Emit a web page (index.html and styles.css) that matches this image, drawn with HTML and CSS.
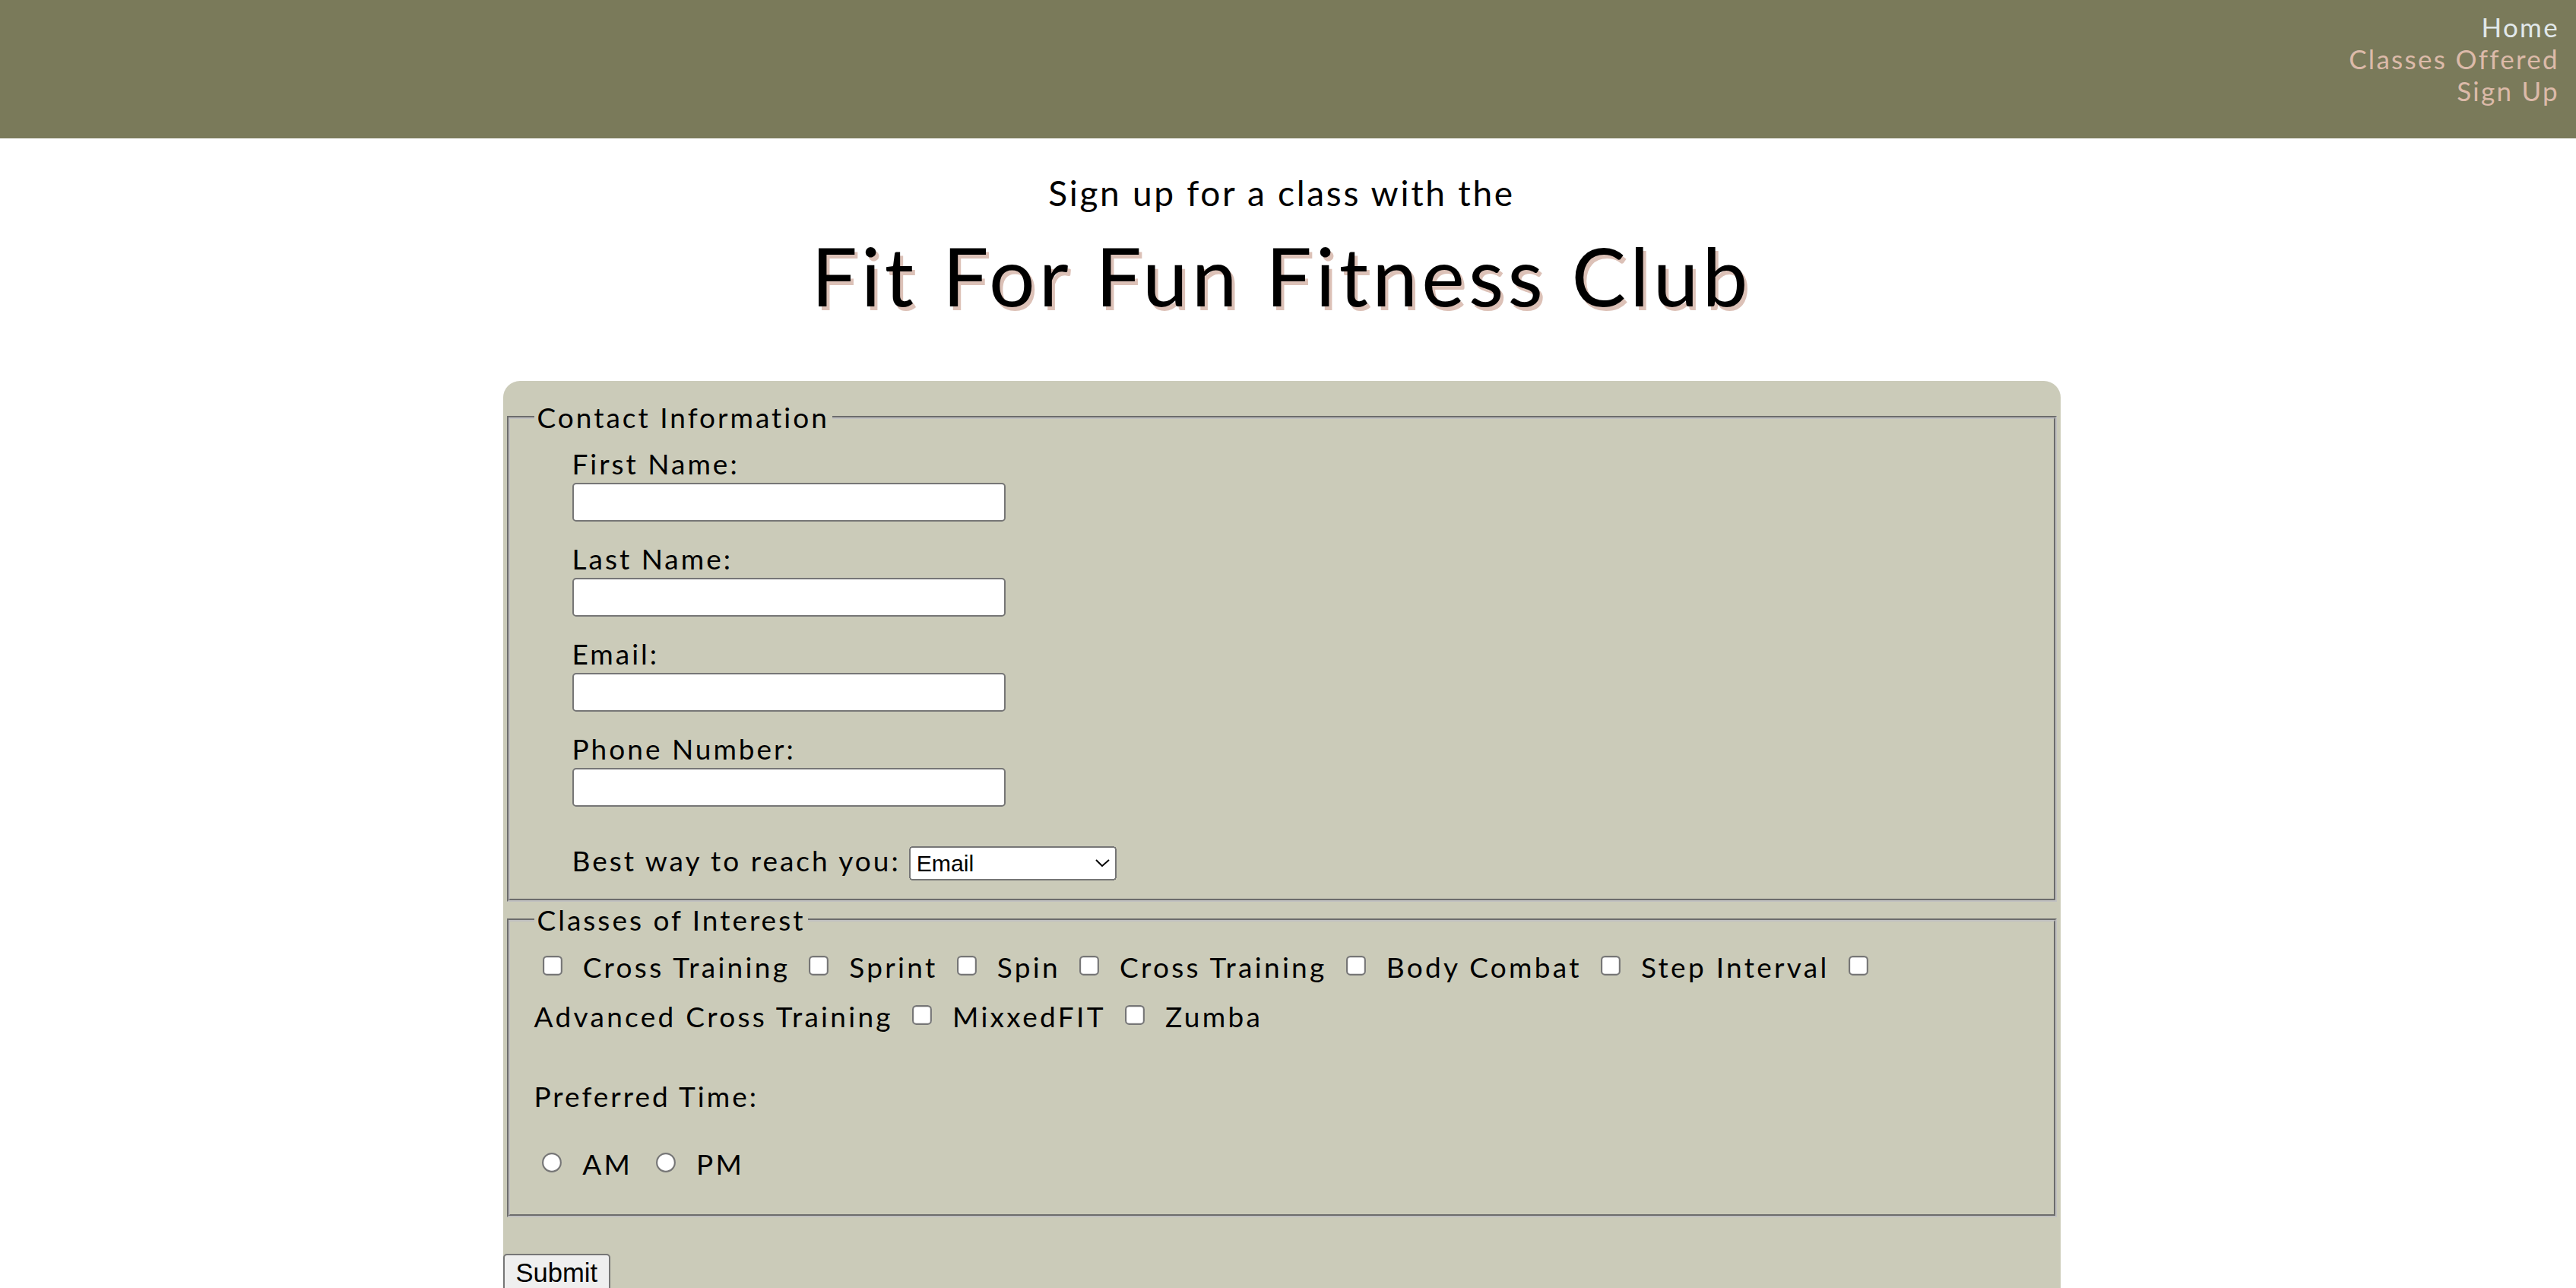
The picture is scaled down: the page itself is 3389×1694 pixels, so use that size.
FILE: index.html
```html
<!DOCTYPE html>
<html lang="en">
<head>
<meta charset="utf-8">
<title>Sign Up - Fit For Fun Fitness Club</title>
<link rel="stylesheet" href="styles.css">
</head>
<body>
<header class="site-header">
  <nav class="main-nav">
    <ul class="nav-list">
      <li><a href="#" class="nav-link nav-link-current">Home</a></li>
      <li><a href="#" class="nav-link">Classes Offered</a></li>
      <li><a href="#" class="nav-link">Sign Up</a></li>
    </ul>
  </nav>
</header>
<main class="page">
  <h2 class="intro">Sign up for a class with the</h2>
  <h1 class="club-title">Fit For Fun Fitness Club</h1>
  <form class="signup-form" action="#">
    <fieldset class="group group-contact">
      <legend class="group-legend">Contact Information</legend>
      <div class="field">
        <label class="field-label" for="first">First Name:</label>
        <input class="text-input" type="text" id="first" name="first">
      </div>
      <div class="field">
        <label class="field-label" for="last">Last Name:</label>
        <input class="text-input" type="text" id="last" name="last">
      </div>
      <div class="field">
        <label class="field-label" for="email">Email:</label>
        <input class="text-input" type="email" id="email" name="email">
      </div>
      <div class="field">
        <label class="field-label" for="phone">Phone Number:</label>
        <input class="text-input" type="tel" id="phone" name="phone">
      </div>
      <div class="reach">
        <label class="field-label" for="reach">Best way to reach you:</label>
        <select class="reach-select" id="reach" name="reach">
          <option>Email</option>
          <option>Phone</option>
        </select>
      </div>
    </fieldset>
    <fieldset class="group group-classes">
      <legend class="group-legend">Classes of Interest</legend>
      <div class="choice-list">
        <input class="choice-box" type="checkbox" id="c1"><label class="choice-label" for="c1">Cross Training</label>
        <input class="choice-box" type="checkbox" id="c2"><label class="choice-label" for="c2">Sprint</label>
        <input class="choice-box" type="checkbox" id="c3"><label class="choice-label" for="c3">Spin</label>
        <input class="choice-box" type="checkbox" id="c4"><label class="choice-label" for="c4">Cross Training</label>
        <input class="choice-box" type="checkbox" id="c5"><label class="choice-label" for="c5">Body Combat</label>
        <input class="choice-box" type="checkbox" id="c6"><label class="choice-label" for="c6">Step Interval</label>
        <input class="choice-box" type="checkbox" id="c7"><label class="choice-label" for="c7">Advanced Cross Training</label>
        <input class="choice-box" type="checkbox" id="c8"><label class="choice-label" for="c8">MixxedFIT</label>
        <input class="choice-box" type="checkbox" id="c9"><label class="choice-label" for="c9">Zumba</label>
      </div>
      <p class="time-title">Preferred Time:</p>
      <div class="choice-list time-list">
        <input class="choice-radio" type="radio" name="time" id="am"><label class="choice-label time-label" for="am">AM</label>
        <input class="choice-radio" type="radio" name="time" id="pm"><label class="choice-label time-label" for="pm">PM</label>
      </div>
    </fieldset>
    <button class="submit-btn" type="submit">Submit</button>
  </form>
</main>
</body>
</html>
```

FILE: styles.css
```css
html, body {
  margin: 0;
  padding: 0;
}

body {
  font-family: Lato, "Open Sans", sans-serif;
  color: #000;
  background: #fff;
  letter-spacing: 3px;
}

.site-header {
  background: #7a7a5a;
  padding: 14px 22px 42px;
}

.nav-list {
  list-style: none;
  margin: 0;
  padding: 0;
  text-align: right;
  font-size: 35px;
  line-height: 42px;
  letter-spacing: 2.3px;
}

.nav-link {
  color: #dcbaa9;
  text-decoration: none;
}

.nav-link-current {
  color: #e1e8ea;
}

.page {
  padding-right: 17px;
}

.intro {
  margin: 44px 0 0;
  font-size: 46px;
  line-height: 56px;
  font-weight: 400;
  letter-spacing: 2.7px;
  text-align: center;
}

.club-title {
  margin: 16px 0 0;
  font-size: 107px;
  line-height: 128px;
  font-weight: 400;
  letter-spacing: 5.2px;
  text-align: center;
  text-shadow: 4px 5px 0 #dcc1b7;
}

.signup-form {
  width: 2049px;
  margin: 75px auto 0;
  padding: 26px 0 40px;
  background: #cbcbb9;
  border-radius: 22px 22px 0 0;
}

.group {
  margin: 0 5px 2px;
  border: 4px groove rgb(192, 192, 192);
  padding: 0 32px;
  min-width: 0;
}

.group-contact {
  padding-top: 17px;
  padding-bottom: 24px;
}

.group-classes {
  padding-top: 7px;
  padding-bottom: 34px;
}

.group-legend {
  padding: 0 4px;
  font-size: 37px;
  line-height: 44px;
}

.field {
  margin: 0 0 27px 50px;
}

.field-label {
  display: block;
  font-size: 37px;
  line-height: 44px;
  margin-bottom: 3px;
}

.text-input {
  display: block;
  box-sizing: border-box;
  width: 570px;
  height: 51px;
  margin: 0;
  padding: 0 8px;
  border: 2px solid #767676;
  border-radius: 5px;
  background: #fff;
  font-size: 30px;
}

.reach {
  display: flex;
  align-items: baseline;
  gap: 11px;
  margin: 49px 0 0 50px;
}

.reach .field-label {
  margin-bottom: 0;
}

.reach-select {
  zoom: 2.161;
  width: 126.3px;
  height: 20.4px;
  font-family: Arial, "Liberation Sans", sans-serif;
  font-size: 14px;
  letter-spacing: 0;
  margin: 0;
}

.choice-list {
  display: flex;
  flex-wrap: wrap;
  align-items: center;
}

.choice-box {
  zoom: 2.161;
  margin: 0 11.6px 0 5.1px;
}

.choice-radio {
  zoom: 2.161;
  margin: 0 11.5px 0 5px;
}

.choice-label {
  font-size: 37px;
  line-height: 65px;
  letter-spacing: 3.3px;
  margin-right: 14px;
}

.time-label {
  margin-right: 20px;
}

.time-title {
  margin: 51px 0 0;
  font-size: 37px;
  line-height: 44px;
}

.time-list {
  margin-top: 34px;
}

.submit-btn {
  display: block;
  zoom: 2.161;
  margin: 22.2px 0 0;
  font-family: Arial, "Liberation Sans", sans-serif;
  font-size: 16px;
  letter-spacing: 0;
}
```
